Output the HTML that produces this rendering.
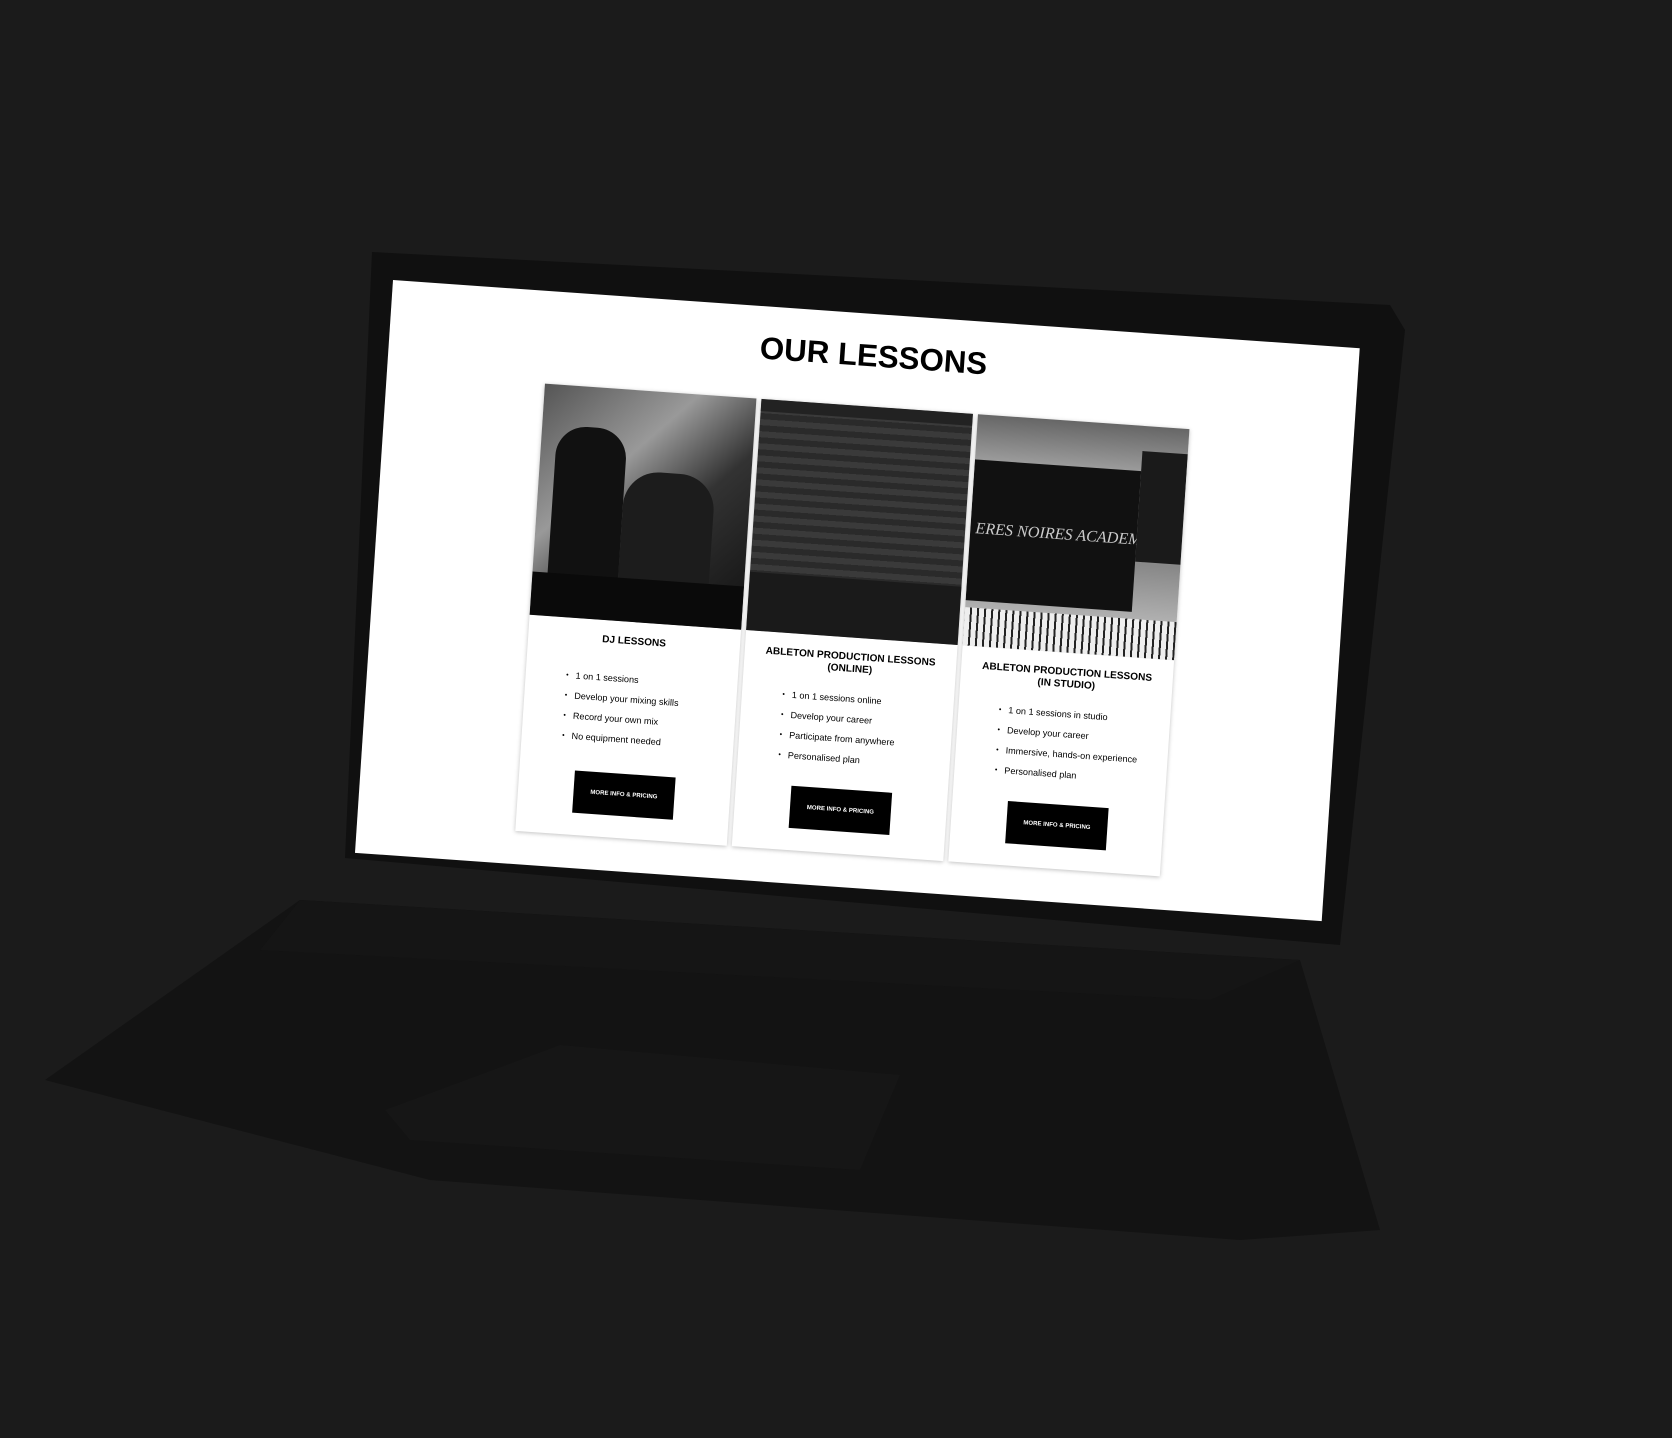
<!DOCTYPE html>
<html><head><meta charset="utf-8"><style>
html,body{margin:0;padding:0;}
body{width:1672px;height:1438px;background:#1b1b1b;position:relative;overflow:hidden;font-family:"Liberation Sans",sans-serif;}
svg.bg{position:absolute;left:0;top:0;}
#screen{position:absolute;left:0;top:0;width:960px;height:570px;background:#fff;transform-origin:0 0;transform:matrix(1.007,0.0711,-0.0667,1.005,393,280);overflow:hidden;}
h1{margin:0;position:absolute;top:24px;left:0;width:960px;text-align:center;font-size:31px;font-weight:bold;color:#000;letter-spacing:0;}
.card{position:absolute;top:92px;width:210px;height:445px;background:#fff;box-shadow:0 1px 4px rgba(0,0,0,.25);}
.img{height:230px;position:relative;overflow:hidden;}
.t{font-size:10px;font-weight:bold;text-align:center;margin-top:14px;line-height:12px;}
ul{margin:22px 0 0 40px;padding:0;font-size:9px;line-height:18px;list-style:none;}
li:before{content:"•";font-size:7px;margin-right:7px;position:relative;top:-1px;}
.btn{position:absolute;left:55px;width:100px;height:42px;background:#000;color:#fff;font-size:6px;font-weight:bold;text-align:center;line-height:42px;bottom:22px;}
</style></head><body>
<svg class="bg" width="1672" height="1438">
<polygon points="45,1080 300,900 1300,960 1380,1230 1240,1240 430,1180" fill="#131313"/>
<polygon points="300,900 1300,960 1210,1000 260,950" fill="#151515"/>
<polygon points="385,1110 560,1045 900,1075 860,1170 410,1140" fill="#161616"/>
<polygon points="372,252 1390,305 1405,330 1340,945 345,858" fill="#101010"/>
</svg>
<div id="screen">
<h1>OUR LESSONS</h1>
<div class="card" style="left:157px">
<div class="img" style="background:linear-gradient(135deg,#555 0%,#999 35%,#333 60%,#111 100%)">
<div style="position:absolute;left:15px;top:40px;width:70px;height:160px;background:#111;border-radius:30px 30px 0 0"></div>
<div style="position:absolute;left:85px;top:80px;width:90px;height:140px;background:#1c1c1c;border-radius:35px 35px 0 0"></div>
<div style="position:absolute;left:0;top:187px;width:210px;height:43px;background:#0a0a0a"></div>
</div>
<div class="t">DJ LESSONS</div>
<ul><li>1 on 1 sessions</li><li>Develop your mixing skills</li><li>Record your own mix</li><li>No equipment needed</li></ul>
<div class="btn">MORE INFO &amp; PRICING</div>
</div>
<div class="card" style="left:372px">
<div class="img" style="background:repeating-linear-gradient(0deg,#3a3a3a 0 6px,#2a2a2a 6px 12px)">
<div style="position:absolute;left:0;top:172px;width:210px;height:58px;background:#1a1a1a"></div>
<div style="position:absolute;left:0;top:0;width:210px;height:12px;background:#222"></div>
</div>
<div class="t">ABLETON PRODUCTION LESSONS<br>(ONLINE)</div>
<ul style="margin-top:14px"><li>1 on 1 sessions online</li><li>Develop your career</li><li>Participate from anywhere</li><li>Personalised plan</li></ul>
<div class="btn">MORE INFO &amp; PRICING</div>
</div>
<div class="card" style="left:587px">
<div class="img" style="background:linear-gradient(180deg,#666 0%,#aaa 25%,#888 60%,#ccc 100%)">
<div style="position:absolute;left:0;top:45px;width:165px;height:140px;background:#111"></div>
<div style="position:absolute;left:5px;top:105px;color:#ccc;font-size:16px;font-style:italic;font-family:'Liberation Serif',serif">ERES NOIRES ACADEMY</div>
<div style="position:absolute;left:165px;top:25px;width:45px;height:110px;background:#1a1a1a"></div>
<div style="position:absolute;left:0;top:192px;width:210px;height:38px;background:repeating-linear-gradient(90deg,#eee 0 5px,#222 5px 7px)"></div>
</div>
<div class="t">ABLETON PRODUCTION LESSONS<br>(IN STUDIO)</div>
<ul style="margin-top:14px"><li>1 on 1 sessions in studio</li><li>Develop your career</li><li>Immersive, hands-on experience</li><li>Personalised plan</li></ul>
<div class="btn">MORE INFO &amp; PRICING</div>
</div>
</div>
</body></html>
